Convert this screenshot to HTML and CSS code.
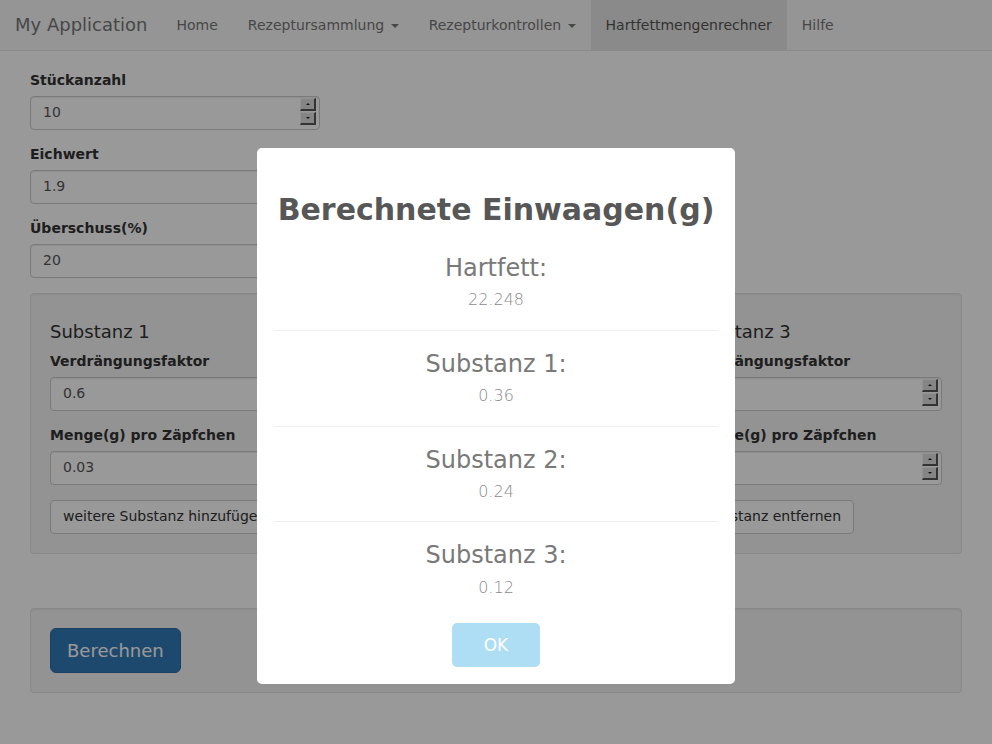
FILE: index.html
```html
<!DOCTYPE html>
<html lang="de">
<head>
<meta charset="utf-8">
<title>Hartfettmengenrechner</title>
<link rel="stylesheet" href="styles.css">
</head>
<body>
<nav class="navbar">
  <a class="brand" href="#">My Application</a>
  <ul class="nav">
    <li><a href="#">Home</a></li>
    <li><a href="#">Rezeptursammlung <span class="caret"></span></a></li>
    <li><a href="#">Rezepturkontrollen <span class="caret"></span></a></li>
    <li class="active"><a href="#">Hartfettmengenrechner</a></li>
    <li><a href="#">Hilfe</a></li>
  </ul>
</nav>

<main class="content">
  <div class="form-group">
    <label>Stückanzahl</label>
    <div class="form-control num narrow"><input value="10"><span class="spin"><i class="up"></i><i class="down"></i></span></div>
  </div>
  <div class="form-group">
    <label>Eichwert</label>
    <div class="form-control num narrow"><input value="1.9"><span class="spin"><i class="up"></i><i class="down"></i></span></div>
  </div>
  <div class="form-group">
    <label>Überschuss(%)</label>
    <div class="form-control num narrow"><input value="20"><span class="spin"><i class="up"></i><i class="down"></i></span></div>
  </div>

  <section class="well well-gap">
    <div class="substances">
      <div class="substance">
        <h4>Substanz 1</h4>
        <div class="form-group">
          <label>Verdrängungsfaktor</label>
          <div class="form-control num"><input value="0.6"><span class="spin"><i class="up"></i><i class="down"></i></span></div>
        </div>
        <div class="form-group">
          <label>Menge(g) pro Zäpfchen</label>
          <div class="form-control num"><input value="0.03"><span class="spin"><i class="up"></i><i class="down"></i></span></div>
        </div>
        <button class="btn">weitere Substanz hinzufügen</button>
      </div>
      <div class="substance">
        <h4>Substanz 2</h4>
        <div class="form-group">
          <label>Verdrängungsfaktor</label>
          <div class="form-control num"><input value="1"><span class="spin"><i class="up"></i><i class="down"></i></span></div>
        </div>
        <div class="form-group">
          <label>Menge(g) pro Zäpfchen</label>
          <div class="form-control num"><input value="0.02"><span class="spin"><i class="up"></i><i class="down"></i></span></div>
        </div>
        <button class="btn">Substanz entfernen</button>
      </div>
      <div class="substance">
        <h4>Substanz 3</h4>
        <div class="form-group">
          <label>Verdrängungsfaktor</label>
          <div class="form-control num"><input value="0.8"><span class="spin"><i class="up"></i><i class="down"></i></span></div>
        </div>
        <div class="form-group">
          <label>Menge(g) pro Zäpfchen</label>
          <div class="form-control num"><input value="0.01"><span class="spin"><i class="up"></i><i class="down"></i></span></div>
        </div>
        <button class="btn">Substanz entfernen</button>
      </div>
    </div>
  </section>

  <section class="well">
    <button class="btn btn-primary btn-lg">Berechnen</button>
  </section>
</main>

<div class="overlay"></div>
<div class="sweet-alert">
  <h2>Berechnete Einwaagen(g)</h2>
  <div class="results">
    <h3>Hartfett:</h3>
    <p>22.248</p>
    <hr>
    <h3>Substanz 1:</h3>
    <p>0.36</p>
    <hr>
    <h3>Substanz 2:</h3>
    <p>0.24</p>
    <hr>
    <h3>Substanz 3:</h3>
    <p>0.12</p>
  </div>
  <button class="confirm">OK</button>
</div>
</body>
</html>
```

FILE: styles.css
```css
* { box-sizing: border-box; }
html, body { margin: 0; padding: 0; }
body {
  font-family: "DejaVu Sans", "Noto Sans", sans-serif;
  font-size: 14px;
  line-height: 1.42857;
  color: #333;
  background: #fff;
}

/* navbar */
.navbar {
  display: flex;
  height: 51px;
  background: #f8f8f8;
  border-bottom: 1px solid #e7e7e7;
  margin-bottom: 20px;
}
.brand {
  display: block;
  height: 50px;
  padding: 15px 14px 15px 15px;
  font-size: 18px;
  line-height: 20px;
  color: #777;
  text-decoration: none;
}
.nav { display: flex; list-style: none; margin: 0; padding: 0; }
.nav a {
  display: block;
  padding: 15px;
  line-height: 20px;
  color: #777;
  text-decoration: none;
}
.nav .active a { background: #e7e7e7; color: #555; }
.caret {
  display: inline-block;
  width: 0; height: 0;
  margin-left: 2px;
  vertical-align: middle;
  border-top: 4px solid;
  border-left: 4px solid transparent;
  border-right: 4px solid transparent;
}

/* form */
.content { padding: 0 30px; }
.form-group { margin-bottom: 15px; }
label {
  display: inline-block;
  margin-bottom: 5px;
  font-weight: bold;
}
.form-control {
  display: flex;
  align-items: center;
  width: 100%;
  height: 34px;
  padding: 6px 12px;
  background: #fff;
  border: 1px solid #ccc;
  border-radius: 4px;
  box-shadow: inset 0 1px 1px rgba(0,0,0,.075);
}
.form-control.num { padding-right: 3px; }
.form-control.narrow { width: 290px; }
.form-control input {
  flex: 1;
  min-width: 0;
  border: 0;
  padding: 0;
  margin: 0;
  font: inherit;
  color: #555;
  background: transparent;
  outline: none;
}
.spin { display: flex; flex-direction: column; gap: 1px; margin-top: -2px; }
.spin i {
  position: relative;
  display: block;
  width: 16px;
  height: 13px;
  background: #dedede;
  border-style: solid;
  border-width: 1px 2px 2px 1px;
  border-color: #f4f4f4 #555 #555 #f4f4f4;
}
.spin i::after {
  content: "";
  position: absolute;
  left: 5px;
  top: 4px;
  border-left: 2px solid transparent;
  border-right: 2px solid transparent;
}
.spin .up::after { border-bottom: 2px solid #222; }
.spin .down::after { border-top: 2px solid #222; }

.well {
  padding: 19px;
  margin-bottom: 20px;
  background: #f5f5f5;
  border: 1px solid #e3e3e3;
  border-radius: 4px;
  box-shadow: inset 0 1px 1px rgba(0,0,0,.05);
}
.well-gap { margin-bottom: 54px; }
.substances {
  display: grid;
  grid-template-columns: repeat(3, 251px);
  justify-content: space-between;
}
.substance h4 {
  margin: 9px 0 10px;
  font-size: 18px;
  font-weight: normal;
  line-height: 1.1;
}

.btn {
  display: inline-block;
  padding: 6px 12px;
  font: inherit;
  font-size: 14px;
  line-height: 1.42857;
  color: #333;
  background: #fff;
  border: 1px solid #ccc;
  border-radius: 4px;
}
.btn-primary { color: #fff; background: #337ab7; border-color: #2e6da4; }
.btn-lg {
  padding: 10px 16px;
  font-size: 18px;
  line-height: 23px;
  border-radius: 6px;
}

/* modal */
.overlay {
  position: fixed;
  inset: 0;
  background: rgba(0,0,0,.4);
}
.sweet-alert {
  position: fixed;
  left: 50%;
  top: 148px;
  width: 478px;
  margin-left: -239px;
  padding: 17px;
  background: #fff;
  border-radius: 5px;
  text-align: center;
}
.sweet-alert h2 {
  margin: 25px 0;
  font-size: 30px;
  line-height: 40px;
  font-weight: bold;
  color: #575757;
}
.results h3 {
  margin: 20px 0 10px;
  font-size: 24px;
  line-height: 1.1;
  font-weight: normal;
  color: #797979;
}
.results p {
  margin: 0;
  font-size: 16px;
  line-height: 18.4px;
  font-weight: 300;
  color: #8a8a8a;
}
.results hr {
  margin: 20px 0;
  border: 0;
  border-top: 1px solid #eee;
}
.confirm {
  margin: 26px 5px 0;
  padding: 10px 32px;
  font: inherit;
  font-size: 17px;
  line-height: 24px;
  color: #fff;
  background: #aedef4;
  border: none;
  border-radius: 5px;
}
```
